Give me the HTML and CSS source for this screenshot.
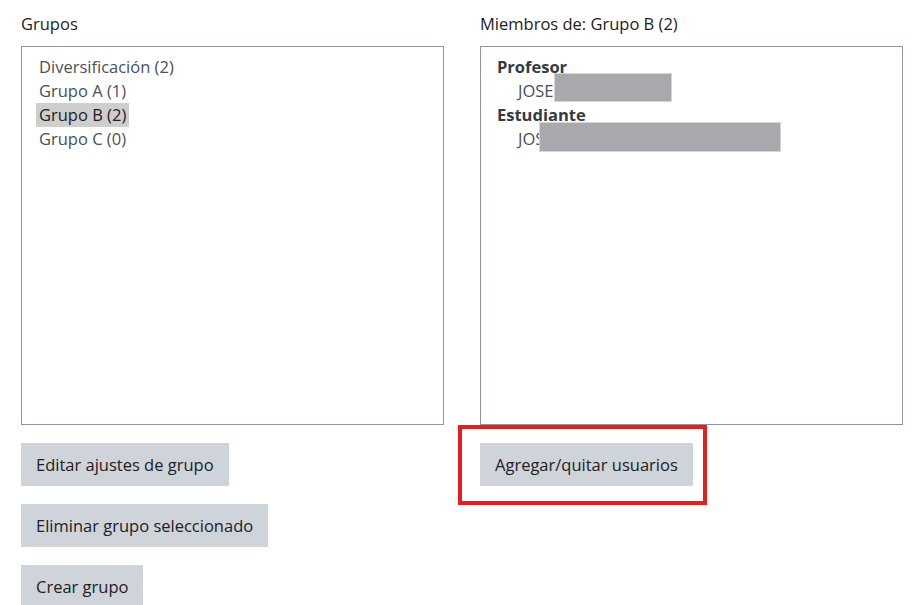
FILE: index.html
```html
<!DOCTYPE html>
<html lang="es">
<head>
    <meta charset="UTF-8">
    <meta name="viewport" content="width=device-width, initial-scale=1.0">
    <title>Grupos</title>
    <link rel="stylesheet" href="styles.css">
</head>
<body>
    <div class="groups-page">
        <div class="column">
            <label class="col-label" for="groups">Grupos</label>
            <div class="list-box" id="groups">
                <div class="option">Diversificación (2)</div>
                <div class="option">Grupo A (1)</div>
                <div class="option selected">Grupo B (2)</div>
                <div class="option">Grupo C (0)</div>
            </div>
            <div class="actions">
                <div><button>Editar ajustes de grupo</button></div>
                <div><button>Eliminar grupo seleccionado</button></div>
                <div><button>Crear grupo</button></div>
            </div>
        </div>

        <div class="column">
            <label class="col-label" for="members">Miembros de: Grupo B (2)</label>
            <div class="list-box" id="members">
                <div class="role">Profesor</div>
                <div class="member">JOSE<span class="hidden-name name-short"></span></div>
                <div class="role">Estudiante</div>
                <div class="member">JOS<span class="hidden-name name-long"></span></div>
            </div>
            <div class="actions">
                <div><span class="highlight"><button>Agregar/quitar usuarios</button></span></div>
            </div>
        </div>
    </div>
</body>
</html>
```

FILE: styles.css
```css
body {
    margin: 0;
    font-family: "Open Sans", "Noto Sans", sans-serif;
    font-size: 16.5px;
    color: #1d2125;
    background: #fff;
}

.groups-page {
    display: grid;
    grid-template-columns: 423px 423px;
    gap: 36px;
    padding: 13px 0 0 21px;
}

.col-label {
    display: block;
    line-height: 22px;
    margin-bottom: 11px;
}

.list-box {
    height: 379px;
    box-sizing: border-box;
    border: 1px solid #8f959e;
    padding: 8px 14px;
}

.option {
    clear: both;
    float: left;
    padding: 0 3px;
    line-height: 24px;
    color: #495057;
}

.option.selected {
    background: #cecece;
    color: #1d2125;
}

.role {
    padding-left: 2px;
    line-height: 24px;
    font-weight: bold;
    color: #343a40;
}

.member {
    padding-left: 23px;
    line-height: 24px;
    color: #495057;
}

/* names are blanked out with a grey block */
.hidden-name {
    display: inline-block;
    background: #a8a9ad;
    border: 1px solid #d4d5d7;
    box-sizing: border-box;
    margin-top: -10px;
}

.name-short {
    width: 118px;
    height: 29px;
    margin-left: 1px;
    margin-bottom: -5px;
}

.name-long {
    width: 242px;
    height: 30px;
    margin-left: -5px;
    margin-bottom: -7px;
}

.actions div {
    margin-top: 18px;
}

button {
    font-family: inherit;
    font-size: 16.5px;
    height: 43px;
    padding: 0 15px;
    border: none;
    background-color: #ced4da;
    color: #1d2125;
    cursor: pointer;
}

.highlight {
    position: relative;
    display: inline-block;
}

.highlight::after {
    content: "";
    position: absolute;
    left: -22px;
    top: -18px;
    right: -14px;
    bottom: -19px;
    border: 4px solid #e61e1e;
    pointer-events: none;
}
```
